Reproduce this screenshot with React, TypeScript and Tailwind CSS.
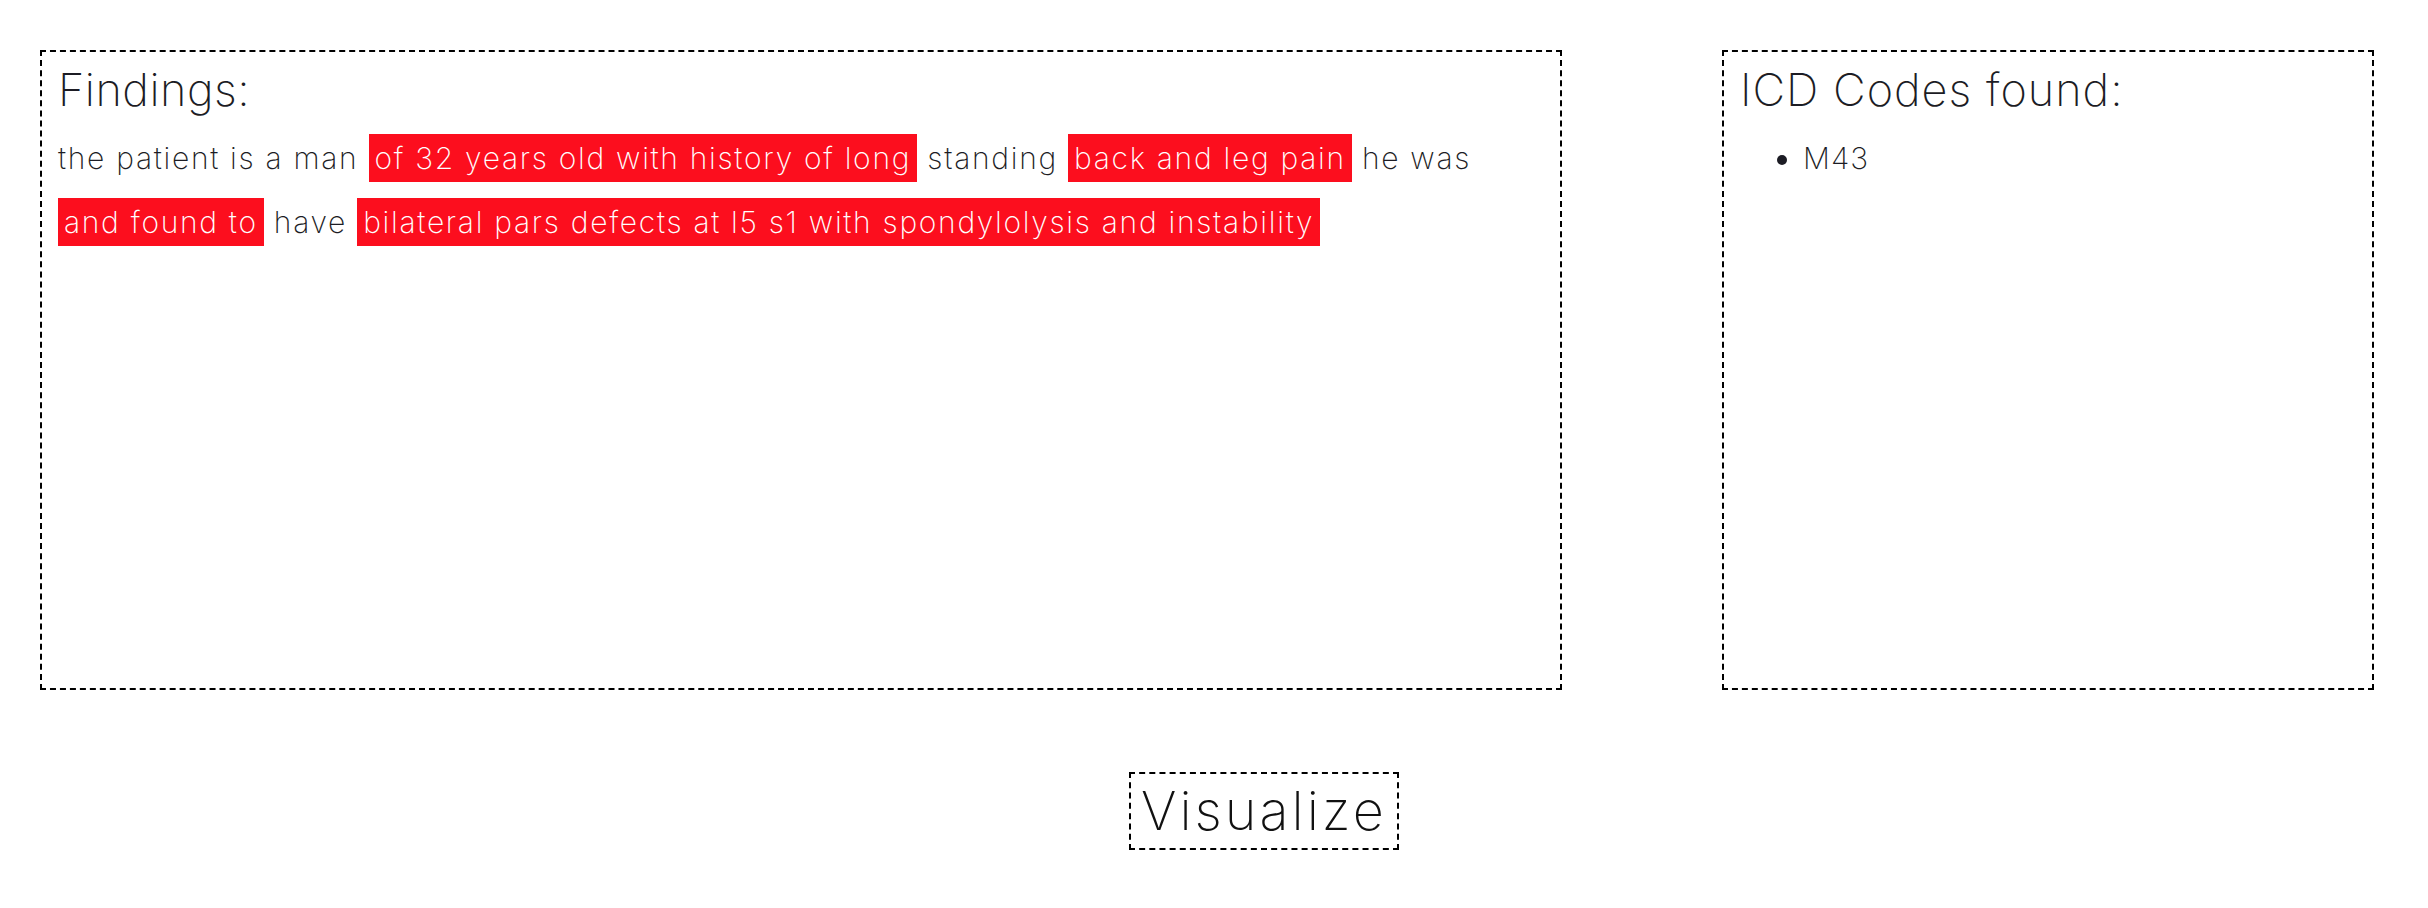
import React from 'react';

const font = { fontFamily: 'Inter, "Open Sans", sans-serif' };

const findings: { text: string; hit: boolean }[] = [
  { text: 'the patient is a man', hit: false },
  { text: 'of 32 years old with history of long', hit: true },
  { text: 'standing', hit: false },
  { text: 'back and leg pain', hit: true },
  { text: 'he was', hit: false },
  { text: 'and found to', hit: true },
  { text: 'have', hit: false },
  { text: 'bilateral pars defects at l5 s1 with spondylolysis and instability', hit: true },
];

export default function App() {
  return (
    <div className="min-h-screen bg-white text-[#1c1c24] font-extralight pt-[50px] pl-[40px]" style={font}>
      <div className="flex items-start">
        {/* Findings panel */}
        <div className="w-[1522px] h-[640px] border-2 border-dashed border-black px-[16px] pt-[12px]">
          <h2 className="text-[45px] leading-[52px] font-extralight tracking-[0.5px]">Findings:</h2>
          <p className="mt-[10px] text-[30px] leading-[64px] tracking-[1.7px]">
            {findings.map((f, i) => (
              <React.Fragment key={i}>
                {f.hit ? (
                  <span className="bg-[#fc0e1e] text-white px-[6px] py-[6px] whitespace-nowrap">{f.text}</span>
                ) : (
                  <span>{f.text}</span>
                )}{' '}
              </React.Fragment>
            ))}
          </p>
        </div>

        {/* ICD codes panel */}
        <div className="ml-[160px] w-[652px] h-[640px] border-2 border-dashed border-black px-[16px] pt-[12px]">
          <h2 className="text-[45px] leading-[52px] font-extralight tracking-[1px]">ICD Codes found:</h2>
          <ul className="mt-[10px] list-disc pl-[63px] text-[30px] leading-[64px] tracking-[1px]">
            <li>M43</li>
          </ul>
        </div>
      </div>

      <div className="mt-[82px] ml-[1089px]">
        <button className="border-2 border-dashed border-black pl-[10px] pr-[10px] text-[54px] leading-[74px] font-extralight tracking-[3px] text-[#111]">
          Visualize
        </button>
      </div>
    </div>
  );
}
